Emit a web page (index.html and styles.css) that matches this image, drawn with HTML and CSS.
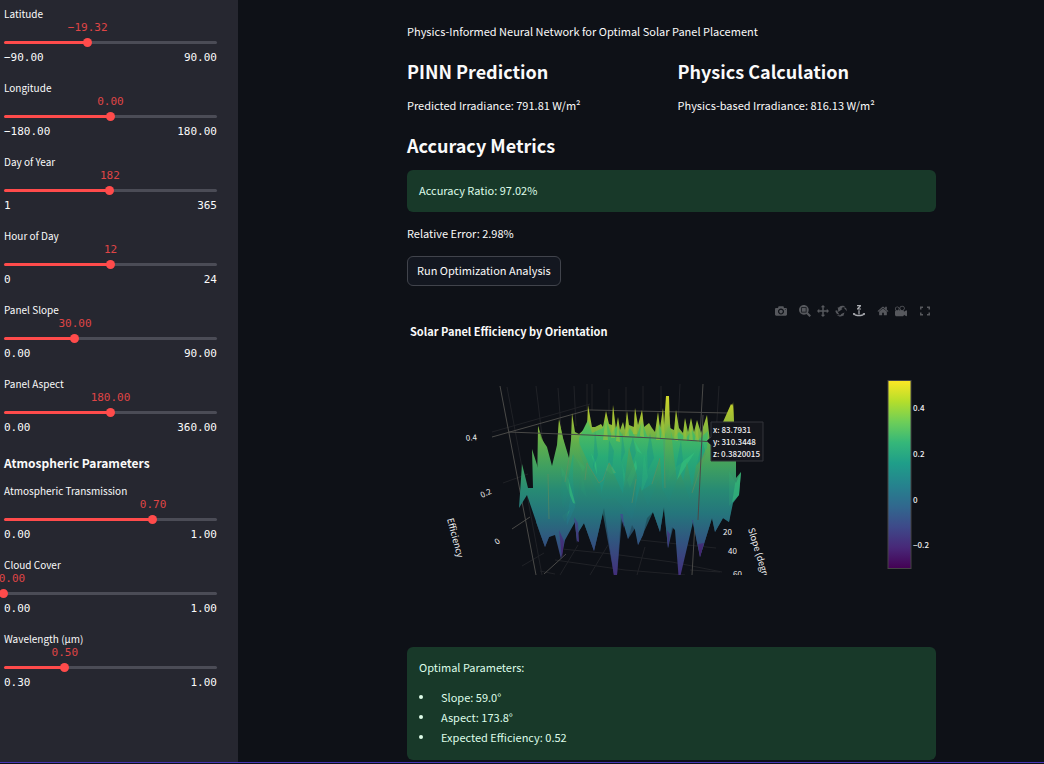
FILE: index.html
```html
<!DOCTYPE html>
<html lang="en">
<head>
<meta charset="utf-8">
<title>Solar Panel Placement</title>
<link rel="stylesheet" href="styles.css">
</head>
<body>
<div class="shell">
  <aside class="sidebar">
    <div class="slider" style="--p:39.27%">
      <label class="slider-label" for="lat">Latitude</label>
      <div class="rail"><output class="value" for="lat">−19.32</output><input class="range" id="lat" type="range" min="-90" max="90" step="0.01" value="-19.32"></div>
      <div class="limits"><span>−90.00</span><span>90.00</span></div>
    </div>
    <div class="slider" style="--p:50%">
      <label class="slider-label" for="lon">Longitude</label>
      <div class="rail"><output class="value" for="lon">0.00</output><input class="range" id="lon" type="range" min="-180" max="180" step="0.01" value="0"></div>
      <div class="limits"><span>−180.00</span><span>180.00</span></div>
    </div>
    <div class="slider" style="--p:49.73%">
      <label class="slider-label" for="day">Day of Year</label>
      <div class="rail"><output class="value" for="day">182</output><input class="range" id="day" type="range" min="1" max="365" value="182"></div>
      <div class="limits"><span>1</span><span>365</span></div>
    </div>
    <div class="slider" style="--p:50%">
      <label class="slider-label" for="hour">Hour of Day</label>
      <div class="rail"><output class="value" for="hour">12</output><input class="range" id="hour" type="range" min="0" max="24" value="12"></div>
      <div class="limits"><span>0</span><span>24</span></div>
    </div>
    <div class="slider" style="--p:33.33%">
      <label class="slider-label" for="slope">Panel Slope</label>
      <div class="rail"><output class="value" for="slope">30.00</output><input class="range" id="slope" type="range" min="0" max="90" step="0.01" value="30"></div>
      <div class="limits"><span>0.00</span><span>90.00</span></div>
    </div>
    <div class="slider" style="--p:50%">
      <label class="slider-label" for="aspect">Panel Aspect</label>
      <div class="rail"><output class="value" for="aspect">180.00</output><input class="range" id="aspect" type="range" min="0" max="360" step="0.01" value="180"></div>
      <div class="limits"><span>0.00</span><span>360.00</span></div>
    </div>
    <h3 class="sidebar-title">Atmospheric Parameters</h3>
    <div class="slider" style="--p:70%">
      <label class="slider-label" for="trans">Atmospheric Transmission</label>
      <div class="rail"><output class="value" for="trans">0.70</output><input class="range" id="trans" type="range" min="0" max="1" step="0.01" value="0.7"></div>
      <div class="limits"><span>0.00</span><span>1.00</span></div>
    </div>
    <div class="slider" style="--p:0%">
      <label class="slider-label" for="cloud">Cloud Cover</label>
      <div class="rail"><output class="value" for="cloud">0.00</output><input class="range" id="cloud" type="range" min="0" max="1" step="0.01" value="0"></div>
      <div class="limits"><span>0.00</span><span>1.00</span></div>
    </div>
    <div class="slider" style="--p:28.57%">
      <label class="slider-label" for="wave">Wavelength (μm)</label>
      <div class="rail"><output class="value" for="wave">0.50</output><input class="range" id="wave" type="range" min="0.3" max="1" step="0.01" value="0.5"></div>
      <div class="limits"><span>0.30</span><span>1.00</span></div>
    </div>
  </aside>

  <main class="main">
    <p class="text">Physics-Informed Neural Network for Optimal Solar Panel Placement</p>
    <div class="columns">
      <section class="stack">
        <h2 class="heading">PINN Prediction</h2>
        <p class="text">Predicted Irradiance: 791.81 W/m²</p>
      </section>
      <section class="stack">
        <h2 class="heading">Physics Calculation</h2>
        <p class="text">Physics-based Irradiance: 816.13 W/m²</p>
      </section>
    </div>
    <h2 class="heading metrics">Accuracy Metrics</h2>
    <div class="alert ratio">Accuracy Ratio: 97.02%</div>
    <p class="text error">Relative Error: 2.98%</p>
    <button class="run" type="button">Run Optimization Analysis</button>

    <section class="chart">
      <div class="modebar">
        <button class="tool" type="button" aria-label="Download plot"><svg viewBox="0 0 1000 1000"><path transform="matrix(1 0 0 -1 0 850)" d="m500 450c-83 0-150-67-150-150 0-83 67-150 150-150 83 0 150 67 150 150 0 83-67 150-150 150z m400 150h-120c-16 0-34 13-39 29l-31 93c-6 15-23 28-40 28h-340c-16 0-34-13-39-28l-31-94c-6-15-23-28-40-28h-120c-55 0-100-45-100-100v-450c0-55 45-100 100-100h800c55 0 100 45 100 100v450c0 55-45 100-100 100z m-400-550c-138 0-250 112-250 250 0 138 112 250 250 250 138 0 250-112 250-250 0-138-112-250-250-250z m365 380c-19 0-35 16-35 35 0 19 16 35 35 35 19 0 35-16 35-35 0-19-16-35-35-35z"/></svg></button>
        <div class="tools">
          <button class="tool" type="button" aria-label="Zoom"><svg viewBox="0 0 1000 1000"><path transform="matrix(1 0 0 -1 0 850)" d="m1000-25l-250 251c40 63 63 138 63 218 0 224-182 406-407 406-224 0-406-182-406-406s183-406 407-406c80 0 155 22 218 62l250-250 125 125z m-812 250l0 438 437 0 0-438-437 0z m62 375l313 0 0-312-313 0 0 312z"/></svg></button>
          <button class="tool" type="button" aria-label="Pan"><svg viewBox="0 0 1000 1000"><path transform="matrix(1 0 0 -1 0 850)" d="m1000 350l-187 188 0-125-250 0 0 250 125 0-188 187-187-187 125 0 0-250-250 0 0 125-188-188 186-187 0 125 252 0 0-250-125 0 187-188 188 188-125 0 0 250 250 0 0-126 187 188z"/></svg></button>
          <button class="tool" type="button" aria-label="Orbital rotation"><svg viewBox="0 0 1000 1000"><path transform="matrix(1 0 0 -1 0 850)" d="m922 660c-5 4-9 7-14 11-359 263-580-31-580-31l-102 28 58-400c0 1 1 1 2 2 118 108 351 249 351 249s-62 27-100 42c88 83 222 183 347 122 16-8 30-17 44-27-2 1-4 2-6 4z m36-329c0 0 64 229-88 296-62 27-124 14-175-11 157-78 225-208 249-266 8-19 11-31 11-31 2 5 6 15 11 32-5-13-8-20-8-20z m-775-239c70-31 117-50 198-32-121 80-199 346-199 346l-96-15-58-12c0 0 55-226 155-287z m603 133l-317-139c0 0 4-4 19-14 7-5 24-15 24-15s-177-147-389 4c235-287 536-112 536-112l31-22 100 299-4-1z"/></svg></button>
          <button class="tool active" type="button" aria-label="Turntable rotation"><svg viewBox="0 0 12 12"><path d="M4 0h4v1.200L5.900 3.400H8v1.200H4V3.400l2.100-2.200H4zM5.400 5.200h1.200v4.200H5.400zM0 8l2.600.2-.8.9c1.200 1.100 7.200 1.100 8.400 0l-.8-.9L12 8l-.2 2.200-.7-.5c-2 2.100-8.200 2.100-10.200 0l-.7.5z"/></svg></button>
        </div>
        <div class="tools">
          <button class="tool" type="button" aria-label="Reset camera"><svg viewBox="0 0 929 1000"><path transform="matrix(1 0 0 -1 0 850)" d="m786 296v-267q0-15-11-26t-25-10h-214v214h-143v-214h-214q-15 0-25 10t-11 26v267q0 1 0 2t0 2l321 264 321-264q1-1 1-4z m124 39l-34-41q-5-5-12-6h-2q-7 0-12 3l-386 322-386-322q-7-4-13-4-7 2-12 7l-35 41q-4 5-3 13t6 12l401 334q18 15 42 15t43-15l136-114v109q0 8 5 13t13 5h107q8 0 13-5t5-13v-227l122-102q5-5 6-12t-4-13z"/></svg></button>
          <button class="tool" type="button" aria-label="Reset camera to last save"><svg viewBox="0 0 1000 1000"><path transform="matrix(1 0 0 -1 0 850)" d="m938 413l-188-125c0 37-17 71-44 94 64 38 107 107 107 187 0 121-98 219-219 219-121 0-219-98-219-219 0-61 25-117 66-156h-115c30 33 49 76 49 125 0 103-84 187-187 187s-188-84-188-187c0-57 26-107 65-141-38-22-65-62-65-109v-250c0-70 56-126 125-126h500c69 0 125 56 125 126l188-126c34 0 62 28 62 63v375c0 35-28 63-62 63z m-750 0c-69 0-125 56-125 125s56 125 125 125 125-56 125-125-56-125-125-125z m406-1c-87 0-157 70-157 157 0 86 70 156 157 156s156-70 156-156-70-157-156-157z"/></svg></button>
        </div>
        <button class="tool" type="button" aria-label="Fullscreen"><svg viewBox="0 0 12 12"><path d="M1 1.500h3v1.500H2.500v1.500H1zM8 1.500h3v3H9.500V3H8zM1 7.500h1.500V9H4v1.500H1zM9.500 7.500H11v3H8V9h1.500z"/></svg></button>
      </div>
      <h4 class="chart-title">Solar Panel Efficiency by Orientation</h4>
      <svg class="plot" viewBox="407 345 529 270" role="img" aria-label="Efficiency surface by slope and aspect">
        <defs>
          <linearGradient id="front" gradientUnits="userSpaceOnUse" x1="0" y1="395" x2="0" y2="575">
            <stop offset="0" stop-color="#d2d829"/><stop offset=".12" stop-color="#a3bf33"/><stop offset=".27" stop-color="#5fae4d"/><stop offset=".4" stop-color="#3f9f60"/><stop offset=".53" stop-color="#278a74"/><stop offset=".66" stop-color="#25757c"/><stop offset=".8" stop-color="#30577f"/><stop offset="1" stop-color="#432f7c"/>
          </linearGradient>
          <linearGradient id="mid" gradientUnits="userSpaceOnUse" x1="0" y1="405" x2="0" y2="520">
            <stop offset="0" stop-color="#9cc538"/><stop offset=".2" stop-color="#53bd5c"/><stop offset=".45" stop-color="#29ab76"/><stop offset=".75" stop-color="#209080"/><stop offset="1" stop-color="#257688"/>
          </linearGradient>
          <linearGradient id="purple" gradientUnits="userSpaceOnUse" x1="0" y1="515" x2="0" y2="560">
            <stop offset="0" stop-color="#39568a"/><stop offset="1" stop-color="#471b6c"/>
          </linearGradient>
          <linearGradient id="viridis" x1="0" y1="0" x2="0" y2="1">
            <stop offset="0" stop-color="#fde725"/><stop offset=".11" stop-color="#b5de2b"/><stop offset=".22" stop-color="#6ece58"/><stop offset=".33" stop-color="#35b779"/><stop offset=".44" stop-color="#1f9e89"/><stop offset=".56" stop-color="#26828e"/><stop offset=".67" stop-color="#31688e"/><stop offset=".78" stop-color="#3e4989"/><stop offset=".89" stop-color="#482878"/><stop offset="1" stop-color="#440154"/>
          </linearGradient>
          <clipPath id="scene"><path d="M407 384h362v191H407z"/></clipPath>
        </defs>
        <g clip-path="url(#scene)">
          <g class="grid-faint">
            <path d="M507 387l35 188M536 386l6 50M558 388l3 40M574 386l2 40M587 384v26M592 384v26M609 389v25M626 387v30M643 386v24M661 386v24M680 384l-2 40M719 386l-3 50M492 432l98-28M503 483l25-9M522 566l22-13M540 571l15 3M562 549l50 5 60 8 50 10M560 575l18-30M590 575l18-30M637 575l8-28M555 560l70 10 60 5M640 540l76 8M690 570l30 2"/>
          </g>
          <path class="grid-line" d="M500 386l36 189M492 437l96-27h3l137 3M512 529l18-12M544 574l22-20M703 384l-11 191"/>
          <path fill="url(#front)" d="M519 508L522 464 528 488 533 488 532 449 538 468 538 426 541 438 547 447 552 466 557 445 559 419 563 438 569 458 571 440 572 413 575 432 579 434 587 427 588 405 592 427 595 427 601 424 603 427 606 411 609 424 612 425 613 405 616 429 618 417 620 430 623 422 625 430 627 411 629 425 634 427 635 408 638 425 642 410 644 427 649 423 652 428 655 432 658 412 660 428 663 408 664 425 666 396 669 396 670 428 674 430 676 410 679 428 683 433 685 418 688 432 691 418 694 432 697 420 701 433 707 415 710 442 723 422 731 404 733 406 733 401 734 422 736 462 736 478 741 472 739 495 733 503 729 522 723 518 715 532 712 518 700 557 693 522 679 582 675 530 672 527 668 548 664 507 660 532 653 512 647 518 643 535 638 545 635 530 632 525 628 539 621 515 616 590 604 508 594 551 584 523 578 533 577 543 575 522 565 540 561 559 555 535 549 537 545 547 540 533 527 495z"/>
          <g fill="url(#mid)">
            <path d="M579 438L588 420 592 433 603 428 606 418 611 434 617 426 624 438 630 428 636 438 642 421 647 436 655 438 659 424 664 438 669 424 673 439 679 432 686 438 692 430 698 440 708 431 707 448 696 466 690 500 680 472 669 502 658 480 648 506 640 486 632 520 624 508 615 498 603 500 596 490 588 474 580 454z"/>
            <path d="M560 468L568 479 573 454 581 469 577 503 567 525z" opacity=".7"/>
          </g>
          <g class="ridge-light">
            <path d="M576 458l9 9-2 5zM561 466l7 12 6 21 2 5-3-1-11-28zM606 470l3-9 7 12-5 1zM591 453l5 9 1 13zM634 440l8 14-5-3zM695 452l-13 10-5 18zM627 480l9-20 1 8-7 20zM729 471l7 12 5-11-2 23-10 11z"/>
            <path d="M644 452l4 25-7 17zM582 474l5 24-6-8zM570 510l-5 12-3-6zM622 462l5 20-3 6zM670 455l6 14-8 12z" opacity=".4"/>
          </g>
          <g class="ridge-deep">
            <path d="M595 430l3 25-5 14zM609 440l5 11-2 17-4-4zM622 432l3 20-4 10zM633 437l3 16-5 13-3-12zM650 433l4 25-6 12-1-18zM681 440l2 22-7 5zM702 440l4 14-9 11zM564 473l4 21-5 15-3-20z"/>
          </g>
          <g class="ridge-top">
            <path d="M603 440l3-27 2 27zM611 438l2-31 2 31zM616 441l2-23 2 24zM625 436l2-24 2 24zM633 434l2-25 2 25zM640 436l2-25 2 26zM656 440l2-27 2 27zM661 438l2-29 2 29zM674 440l2-29 2 30zM683 440l2-21 2 22zM689 440l2-21 2 22zM695 440l2-19 2 21z"/>
          </g>
          <g fill="url(#front)" class="spires">
            <path d="M536 522L538 426 550 461 555 500 556 533 549 537 545 547z"/>
            <path d="M556 508L559 421 567 457 570 500 565 530z"/>
            <path d="M573 478L574 432 588 462 594 494 587 463 600 484 604 508 594 551 584 523 577 534z"/>
            <path d="M600 498L609 463 614 474 624 496 617 575 614 575z"/>
            <path d="M622 500L629 447 637 476 634 530 628 539z"/>
            <path d="M635 520L641 491 652 484 660 458 664 507 660 532 653 512 638 545z"/>
            <path d="M663 500L667 398 671 432 678 490 673 528 668 548z"/>
            <path d="M675 520L687 462 692 487 706 448 707 495 690 525 680 575z"/>
            <path d="M693 523L704 472 711 455 716 468 720 430 733 403 736 478 729 522 723 518 715 532 712 518 700 557z"/>
          </g>
          <path fill="url(#purple)" d="M574 517l4 6 1 19-2-1zM559 530l3 28 2-17zM620 514l4 14-1-14zM692 520l2 9-1-9zM667 530l1 18 2-14zM698 544l2 13 4-14z"/>
          <path class="edge" d="M548 474l1 45M569 458l-4 24M585 480l2-17 12 20 4-3 6-17 6 10M664 440l1 48M705 453l-13 40M660 458l-8 26M632 503l4-24"/>
          <path class="grid-line" d="M508 432l80 3 66 3 60 4M703 415l-5 105"/>
          <g class="axis">
            <text x="466" y="441" transform="rotate(-5 466 441)">0.4</text>
            <text x="482" y="498" transform="rotate(-25 482 498)">0.2</text>
            <text x="497" y="545" transform="rotate(-35 497 545)">0</text>
            <text x="723" y="535">20</text>
            <text x="728" y="554">40</text>
            <text x="733" y="577">60</text>
            <text class="axis-name" x="447" y="519" transform="rotate(75 447 519)">Efficiency</text>
            <text class="axis-name" x="748" y="529" transform="rotate(73 748 529)">Slope (degrees)</text>
          </g>
        </g>
        <g class="hover">
          <path d="M707 441l4-4v-15h52v39h-52v-16z"/>
          <text x="713" y="433">x: 83.7931</text>
          <text x="713" y="445">y: 310.3448</text>
          <text x="713" y="457">z: 0.3820015</text>
        </g>
        <rect x="888" y="380.500" width="23" height="188" fill="url(#viridis)" stroke="#444"/>
        <g class="scale">
          <text x="913" y="411">0.4</text>
          <text x="913" y="457">0.2</text>
          <text x="913" y="503">0</text>
          <text x="913" y="548">−0.2</text>
        </g>
      </svg>
    </section>

    <div class="alert optimal">
      <p>Optimal Parameters:</p>
      <ul class="list">
        <li>Slope: 59.0°</li>
        <li>Aspect: 173.8°</li>
        <li>Expected Efficiency: 0.52</li>
      </ul>
    </div>
  </main>
</div>
<footer class="edge-line"></footer>
</body>
</html>
```
FILE: styles.css
```css
* { box-sizing: border-box; }
body {
  margin: 0;
  min-height: 100vh;
  display: flex;
  flex-direction: column;
  background: #0e1117;
  color: #fafafa;
  font: 11px/20px "Noto Sans CJK SC", "Noto Sans", sans-serif;
}
h2, h3, h4, p, ul { margin: 0; }
.shell { display: flex; flex: 1; }
.edge-line { height: 2px; border-top: 1px solid #4a36b8; }

.sidebar {
  flex: 0 0 238px;
  padding: 6px 21px 0 4px;
  background: #262730;
}
.slider { height: 60px; margin-bottom: 14px; }
.slider-label { display: block; font-size: 10px; line-height: 16px; }
.rail {
  position: relative;
  height: 28px;
  padding-top: 16px;
}
.rail::before {
  content: "";
  display: block;
  height: 3px;
  margin-top: 3px;
  border-radius: 2px;
  background: linear-gradient(to right, #ff4b4b var(--p), #4b4c56 var(--p));
}
.value {
  position: absolute;
  top: -1px;
  left: max(var(--p), 8px);
  transform: translateX(-50%);
  color: #ff4b4b;
  opacity: .85;
  font: 11px/14px "DejaVu Sans Mono", monospace;
}
.range {
  position: absolute;
  left: -5px;
  top: 16px;
  width: calc(100% + 9px);
  height: 9px;
  margin: 0;
  appearance: none;
  background: transparent;
}
.range::-webkit-slider-thumb {
  appearance: none;
  width: 9px;
  height: 9px;
  border-radius: 50%;
  background: #ff4b4b;
}
.limits {
  display: flex;
  justify-content: space-between;
  font: 11px/16px "DejaVu Sans Mono", monospace;
}
.sidebar-title { margin: 17px 0 10px; font-size: 12px; line-height: 20px; font-weight: 700; }

.main {
  flex: 1;
  min-width: 0;
  display: flex;
  flex-direction: column;
  padding: 21px 108px 2px 169px;
}
.columns { display: grid; grid-template-columns: 1fr 1fr; gap: 12px; margin-top: 16px; }
.stack { display: grid; gap: 10px; }
.heading { font-size: 18px; line-height: 28px; font-weight: 700; }
.metrics { margin-top: 16px; }
.alert { border-radius: 6px; background: #183929; color: #dffde9; padding: 10px 12px 12px; }
.ratio { margin-top: 11px; }
.error { margin-top: 11px; }
.run {
  align-self: flex-start;
  margin-top: 13px;
  padding: 3px 9px 5px;
  border: 1px solid #41444c;
  border-radius: 6px;
  background: #131720;
  color: inherit;
  font: inherit;
}
.chart { margin-top: 19px; }
.modebar { display: flex; justify-content: flex-end; gap: 12px; padding-right: 5px; }
.tools { display: flex; gap: 6px; }
.tool { width: 12px; height: 12px; padding: 0; border: 0; background: none; color: #56585d; }
.tool.active { color: #a9abb0; }
.tool svg { display: block; width: 12px; height: 12px; fill: currentColor; }
.chart-title { margin: 4px 0 4px 3px; font-size: 11px; line-height: 20px; font-weight: 700; }
.plot { display: block; width: 100%; font-family: "Noto Sans CJK SC", "Noto Sans", sans-serif; }
.plot text { fill: #f0f0f2; }
.grid-faint { fill: none; stroke: #202227; }
.grid-line { fill: none; stroke: #4a4a48; }
.ridge-light { fill: #35c27b; opacity: .6; }
.ridge-deep { fill: #1d9584; opacity: .45; }
.ridge-top { fill: #a9c634; opacity: .5; }
.spires { opacity: .75; }
.edge { fill: none; stroke: #6d8b5a; opacity: .5; }
.axis { font-size: 8px; }
.axis .axis-name { font-size: 9px; }
.hover { font-size: 8px; font-weight: 500; }
.hover path { fill: #14161c; stroke: #33353b; }
.scale { font-size: 8px; font-weight: 500; }
.optimal { margin-top: 32px; padding-bottom: 13px; }
.list { padding: 0; margin-top: 10px; list-style: none; }
.list li { display: flex; align-items: center; gap: 18px; }
.list li::before {
  content: "";
  width: 4px;
  height: 4px;
  border-radius: 50%;
  background: currentColor;
}
```
